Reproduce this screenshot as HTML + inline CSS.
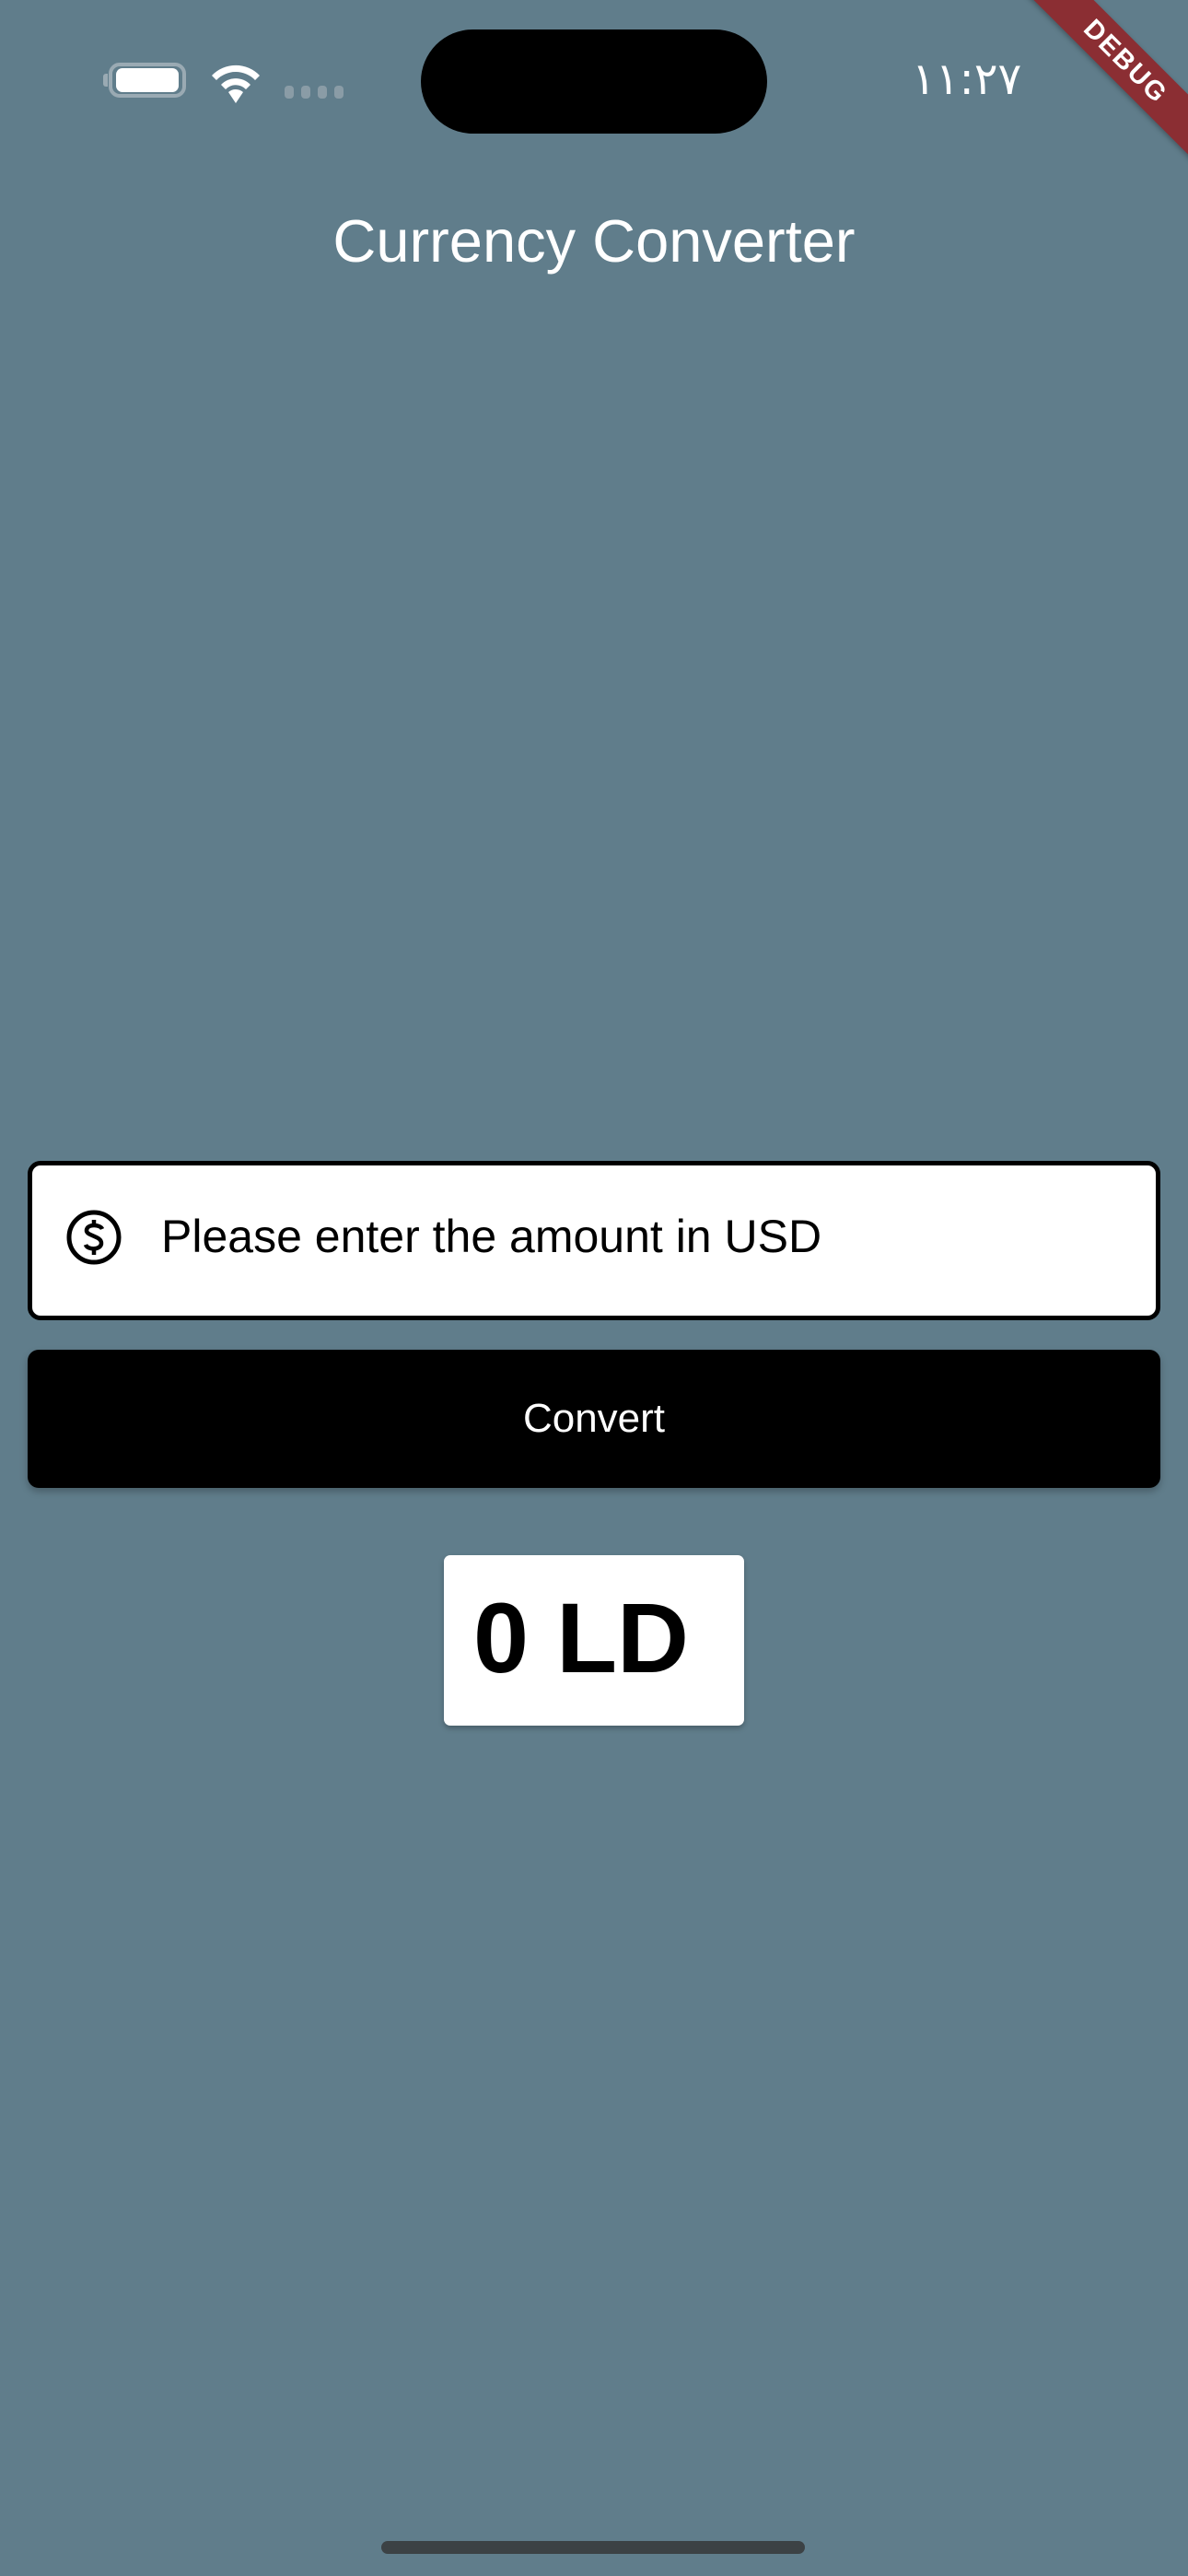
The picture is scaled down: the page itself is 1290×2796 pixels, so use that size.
<!DOCTYPE html>
<html><head><meta charset="utf-8"><style>
html,body{margin:0;padding:0}
body{width:1290px;height:2796px;background:#607D8B;position:relative;overflow:hidden;font-family:"Liberation Sans","DejaVu Sans",sans-serif}
.a{position:absolute}
</style></head><body>
<div class="a" style="left:457px;top:32px;width:376px;height:113px;background:#000;border-radius:57px"></div>
<div class="a" style="left:118px;top:68px;width:84px;height:38px;border:4px solid #9aaab3;border-radius:12px;box-sizing:border-box"></div>
<div class="a" style="left:126px;top:74px;width:68px;height:26px;background:#fff;border-radius:7px"></div>
<div class="a" style="left:112px;top:80px;width:5px;height:14px;background:#9aaab3;border-radius:3px 0 0 3px"></div>
<svg class="a" style="left:226px;top:64px" width="60" height="50" viewBox="0 0 60 50">
<path d="M30 48 L22 36 A12 12 0 0 1 38 36 Z" fill="#fff"/>
<path d="M14 28 A22 22 0 0 1 46 28 L41 33 A15 15 0 0 0 19 33 Z" fill="#fff"/>
<path d="M4 18 A36 36 0 0 1 56 18 L51 23 A29 29 0 0 0 9 23 Z" fill="#fff"/>
</svg>
<div class="a" style="left:309px;top:93px;width:10px;height:14px;background:#8a9ca6;border-radius:4px;box-shadow:18px 0 #8a9ca6,36px 0 #8a9ca6,54px 0 #8a9ca6"></div>
<div class="a" style="left:990px;top:56px;font-size:48px;color:#fff;font-family:'DejaVu Sans',sans-serif;line-height:60px">١١:٢٧</div>
<div class="a" style="left:1072px;top:44px;width:300px;height:46px;background:#8B2E33;transform:rotate(45deg);color:#fff;font-weight:bold;font-size:29px;text-align:center;line-height:46px;letter-spacing:2px;box-shadow:0 2px 6px rgba(0,0,0,.3)">DEBUG</div>
<div class="a" style="left:0;width:1290px;top:224px;text-align:center;color:#fff;font-size:65px;line-height:76px">Currency Converter</div>
<div class="a" style="left:30px;top:1260px;width:1230px;height:173px;background:#fff;border:5px solid #000;border-radius:14px;box-sizing:border-box"></div>
<svg class="a" style="left:71px;top:1312px" width="62" height="62" viewBox="0 0 62 62">
<circle cx="31" cy="31" r="27" fill="none" stroke="#000" stroke-width="5"/>
<path d="M40 22 C38 17 24 16 23 23 C22 30 40 29 39 38 C38 45 24 45 22 39" fill="none" stroke="#000" stroke-width="4.5"/>
<path d="M31 12 V19 M31 43 V50" stroke="#000" stroke-width="4.5"/>
</svg>
<div class="a" style="left:175px;top:1312px;font-size:50px;line-height:60px;color:#000">Please enter the amount in USD</div>
<div class="a" style="left:30px;top:1465px;width:1230px;height:150px;background:#000;border-radius:12px;box-shadow:0 4px 8px rgba(0,0,0,.25);color:#fff;font-size:44px;text-align:center;line-height:150px">Convert</div>
<div class="a" style="left:482px;top:1688px;width:326px;height:185px;background:#fff;border-radius:7px;box-shadow:0 3px 6px rgba(0,0,0,.25)"></div>
<div class="a" style="left:514px;top:1713px;font-size:108px;font-weight:bold;line-height:130px;color:#000">0 LD</div>
<div class="a" style="left:414px;top:2758px;width:460px;height:14px;background:#333;border-radius:7px;opacity:.8"></div>
</body></html>
